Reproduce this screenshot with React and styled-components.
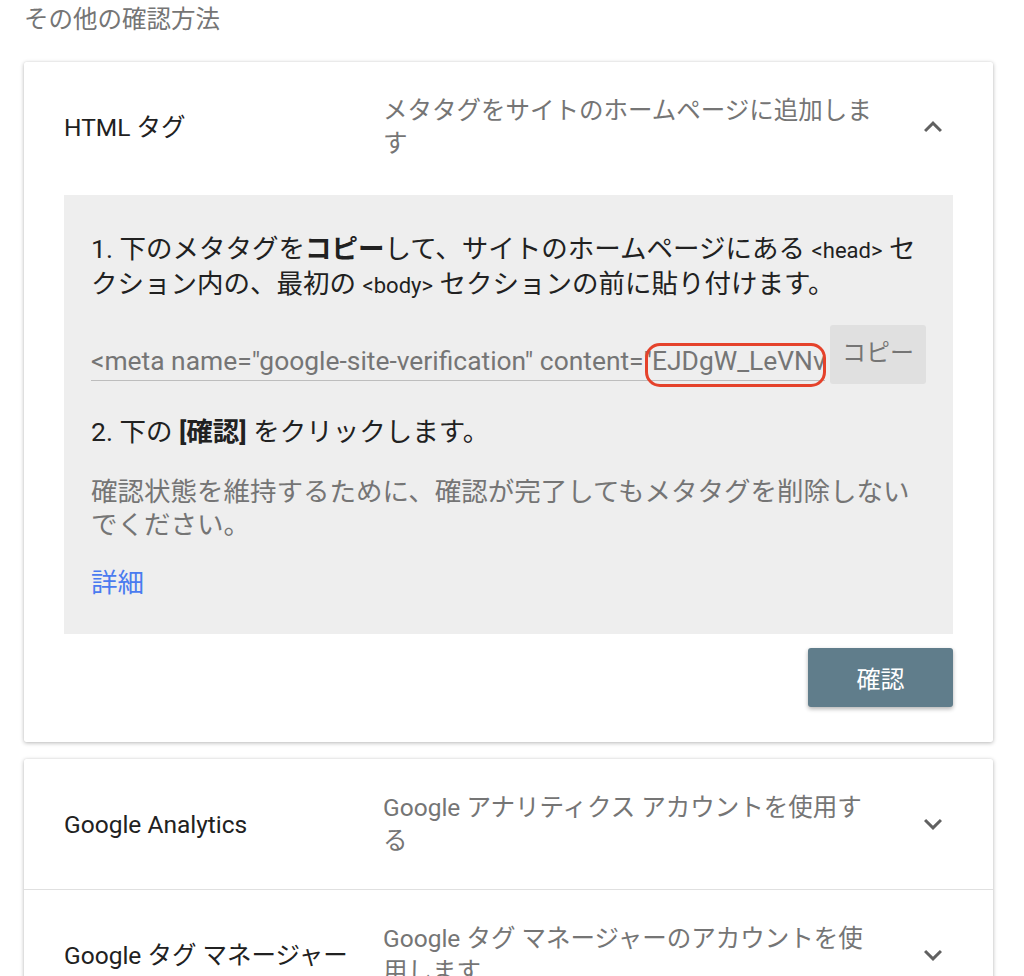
import styled, { createGlobalStyle } from "styled-components";

const GlobalStyle = createGlobalStyle`
  body {
    margin: 0;
    background: #ffffff;
    font-family: "Roboto", "Noto Sans CJK JP", sans-serif;
    color: #212121;
  }
`;

const Page = styled.div`
  padding: 3px 31px 0 24px;
`;

const PageTitle = styled.h2`
  margin: 0 0 26px;
  font-size: 24.5px;
  line-height: 33px;
  font-weight: 400;
  color: #757575;
`;

const Card = styled.div`
  background: #fff;
  border-radius: 2px;
  box-shadow: 0 1px 4px rgba(0, 0, 0, 0.28), 0 0 1px rgba(0, 0, 0, 0.12);
  margin-bottom: 17px;
`;

const MethodRow = styled.div`
  display: grid;
  grid-template-columns: 319px 498px 1fr;
  align-items: center;
  padding: 32px 40px;
  border-top: ${(p) => (p.$divider ? "1px solid #e0e0e0" : "none")};
`;

const MethodName = styled.div`
  font-size: 24.5px;
  line-height: 33px;
  color: #212121;
`;

const MethodDesc = styled.div`
  font-size: 24.5px;
  line-height: 33px;
  color: #757575;
`;

const Chevron = styled.svg`
  width: 36px;
  height: 36px;
  justify-self: end;
  margin-right: 2px;
  fill: #616161;
`;

const CardBody = styled.div`
  padding: 3px 40px 35px;
  display: flex;
  flex-direction: column;
`;

const InfoBox = styled.div`
  background: #eeeeee;
  padding: 37px 27px 35px 27px;
  display: flex;
  flex-direction: column;
`;

const StepText = styled.p`
  margin: ${(p) => p.$mt || "0"} 0 0;
  font-size: 26.5px;
  line-height: 33px;
  color: ${(p) => (p.$muted ? "#757575" : "#212121")};
`;

const Code = styled.span`
  font-size: 22px;
`;

const CopyRow = styled.div`
  display: flex;
  gap: 5px;
  margin: 23px 0 0;
  height: 59px;
`;

const Field = styled.div`
  position: relative;
  flex: 1;
  display: flex;
  align-items: flex-end;
`;

const FieldInput = styled.input`
  width: 100%;
  box-sizing: border-box;
  border: none;
  border-bottom: 1px solid #bdbdbd;
  background: transparent;
  font-family: "Roboto", "Noto Sans CJK JP", sans-serif;
  font-size: 26.4px;
  color: #757575;
  padding: 0 0 1px;
  margin-bottom: 3px;
  height: 38px;
  outline: none;
`;

const Highlight = styled.div`
  position: absolute;
  left: 554px;
  top: 18px;
  width: 181px;
  height: 44px;
  box-sizing: border-box;
  border: 3px solid #e5422b;
  border-radius: 15px;
  pointer-events: none;
`;

const CopyButton = styled.button`
  width: 96px;
  border: none;
  border-radius: 3px;
  background: #e0e0e0;
  color: #757575;
  font-family: "Roboto", "Noto Sans CJK JP", sans-serif;
  font-size: 24px;
  padding: 0 0 8px;
`;

const Link = styled.a`
  margin-top: 25px;
  font-size: 26.5px;
  line-height: 33px;
  color: #4a7bf0;
  text-decoration: none;
`;

const ConfirmButton = styled.button`
  align-self: flex-end;
  margin-top: 14px;
  width: 145px;
  height: 59px;
  border: none;
  border-radius: 3px;
  background: #607d8b;
  color: #ffffff;
  font-family: "Roboto", "Noto Sans CJK JP", sans-serif;
  font-size: 24px;
  box-shadow: 0 2px 4px rgba(0, 0, 0, 0.3);
`;

const ChevronUp = () => (
  <Chevron viewBox="0 0 24 24">
    <path d="M7.41 15.41L12 10.83l4.59 4.58L18 14l-6-6-6 6z" />
  </Chevron>
);

const ChevronDown = () => (
  <Chevron viewBox="0 0 24 24">
    <path d="M7.41 8.59L12 13.17l4.59-4.58L18 10l-6 6-6-6 1.41-1.41z" />
  </Chevron>
);

const otherMethods = [
  { name: "Google Analytics", desc: "Google アナリティクス アカウントを使用する" },
  { name: "Google タグ マネージャー", desc: "Google タグ マネージャーのアカウントを使用します" },
];

const App = () => {
  return (
    <Page>
      <GlobalStyle />
      <PageTitle>その他の確認方法</PageTitle>

      <Card>
        <MethodRow>
          <MethodName>HTML タグ</MethodName>
          <MethodDesc>メタタグをサイトのホームページに追加します</MethodDesc>
          <ChevronUp />
        </MethodRow>
        <CardBody>
          <InfoBox>
            <StepText>
              1. 下のメタタグを<b>コピー</b>して、サイトのホームページにある <Code>&lt;head&gt;</Code> セクション内の、最初の <Code>&lt;body&gt;</Code> セクションの前に貼り付けます。
            </StepText>
            <CopyRow>
              <Field>
                <FieldInput
                  readOnly
                  value={'<meta name="google-site-verification" content="EJDgW_LeVNv8kq2XsZpQ" />'}
                />
                <Highlight />
              </Field>
              <CopyButton>コピー</CopyButton>
            </CopyRow>
            <StepText $mt="31px">
              2. 下の <b>[確認]</b> をクリックします。
            </StepText>
            <StepText $mt="27px" $muted>
              確認状態を維持するために、確認が完了してもメタタグを削除しないでください。
            </StepText>
            <Link href="#">詳細</Link>
          </InfoBox>
          <ConfirmButton>確認</ConfirmButton>
        </CardBody>
      </Card>

      <Card>
        {otherMethods.map((m, i) => (
          <MethodRow key={m.name} $divider={i > 0}>
            <MethodName>{m.name}</MethodName>
            <MethodDesc>{m.desc}</MethodDesc>
            <ChevronDown />
          </MethodRow>
        ))}
      </Card>
    </Page>
  );
};

export default App;
